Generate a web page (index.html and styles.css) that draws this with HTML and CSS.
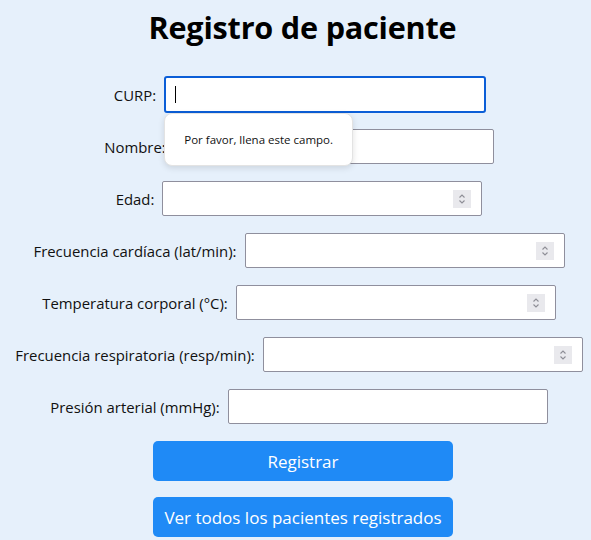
FILE: index.html
```html
<!DOCTYPE html>
<html lang="es">
<head>
<meta charset="utf-8">
<title>Registro de paciente</title>
<link rel="stylesheet" href="styles.css">
</head>
<body>
<h1 class="title">Registro de paciente</h1>
<form class="form">
  <div class="row">
    <label class="label">CURP:</label>
    <div class="field">
      <div class="input focused"><span class="caret"></span></div>
      <div class="tooltip">Por favor, llena este campo.</div>
    </div>
  </div>
  <div class="row">
    <label class="label">Nombre:</label>
    <div class="field"><div class="input"></div></div>
  </div>
  <div class="row">
    <label class="label">Edad:</label>
    <div class="field"><div class="input"><span class="spin"><svg viewBox="0 0 18 18" width="18" height="18"><path d="M6.5 7.5 L9 5 L11.5 7.5 M6.5 10.5 L9 13 L11.5 10.5" fill="none" stroke="#8e8e96" stroke-width="1.1"/></svg></span></div></div>
  </div>
  <div class="row">
    <label class="label">Frecuencia cardíaca (lat/min):</label>
    <div class="field"><div class="input"><span class="spin"><svg viewBox="0 0 18 18" width="18" height="18"><path d="M6.5 7.5 L9 5 L11.5 7.5 M6.5 10.5 L9 13 L11.5 10.5" fill="none" stroke="#8e8e96" stroke-width="1.1"/></svg></span></div></div>
  </div>
  <div class="row">
    <label class="label">Temperatura corporal (°C):</label>
    <div class="field"><div class="input"><span class="spin"><svg viewBox="0 0 18 18" width="18" height="18"><path d="M6.5 7.5 L9 5 L11.5 7.5 M6.5 10.5 L9 13 L11.5 10.5" fill="none" stroke="#8e8e96" stroke-width="1.1"/></svg></span></div></div>
  </div>
  <div class="row">
    <label class="label">Frecuencia respiratoria (resp/min):</label>
    <div class="field"><div class="input"><span class="spin"><svg viewBox="0 0 18 18" width="18" height="18"><path d="M6.5 7.5 L9 5 L11.5 7.5 M6.5 10.5 L9 13 L11.5 10.5" fill="none" stroke="#8e8e96" stroke-width="1.1"/></svg></span></div></div>
  </div>
  <div class="row">
    <label class="label">Presión arterial (mmHg):</label>
    <div class="field"><div class="input"></div></div>
  </div>
  <div class="buttons">
    <button type="button" class="btn">Registrar</button>
    <button type="button" class="btn">Ver todos los pacientes registrados</button>
  </div>
</form>
</body>
</html>
```
FILE: styles.css
```css
html, body {
  margin: 0;
  padding: 0;
}
body {
  background: #e6f0fb;
  font-family: "Open Sans", "Noto Sans", sans-serif;
  color: #111;
  width: 591px;
  height: 540px;
  overflow: hidden;
}
.title {
  margin: 7px 0 0 0;
  padding-left: 14px;
  height: 48px;
  line-height: 40px;
  font-size: 30.6px;
  font-weight: 700;
  text-align: center;
  color: #000;
  letter-spacing: -0.2px;
}
.form {
  margin-top: 22px;
  display: flex;
  flex-direction: column;
  gap: 17px;
}
.row {
  display: flex;
  justify-content: center;
  align-items: center;
  gap: 8px;
  padding-left: 7px;
  height: 35px;
}
.label {
  font-size: 14.9px;
  color: #111;
  white-space: nowrap;
}
.field {
  position: relative;
  width: 320px;
  height: 35px;
}
.input {
  box-sizing: border-box;
  width: 320px;
  height: 35px;
  background: #fff;
  border: 1px solid #8f8f9d;
  border-radius: 2px;
  position: relative;
}
.input.focused {
  border: 2px solid #0b5ed7;
  border-radius: 3px;
  margin: -1px 0 0 0;
  width: 322px;
  height: 37px;
}
.caret {
  position: absolute;
  left: 9px;
  top: 8px;
  width: 1px;
  height: 17px;
  background: #000;
}
.spin {
  position: absolute;
  right: 10px;
  top: 8px;
  width: 18px;
  height: 18px;
  background: #e9e9ed;
  display: flex;
}
.tooltip {
  position: absolute;
  left: 0;
  top: 36px;
  width: 189px;
  height: 53px;
  box-sizing: border-box;
  background: #fff;
  border: 1px solid #e3e3e3;
  border-radius: 8px;
  box-shadow: 0 2px 6px rgba(0,0,0,0.12);
  font-size: 11.5px;
  color: #111;
  display: flex;
  align-items: center;
  justify-content: center;
  z-index: 5;
}
.buttons {
  display: flex;
  flex-direction: column;
  align-items: center;
  gap: 16px;
  padding-left: 15px;
}
.btn {
  width: 300px;
  height: 40px;
  border: none;
  border-radius: 5px;
  background: #1f8af6;
  color: #fff;
  font-family: "Open Sans", "Noto Sans", sans-serif;
  font-size: 17px;
  padding: 0;
}
```
